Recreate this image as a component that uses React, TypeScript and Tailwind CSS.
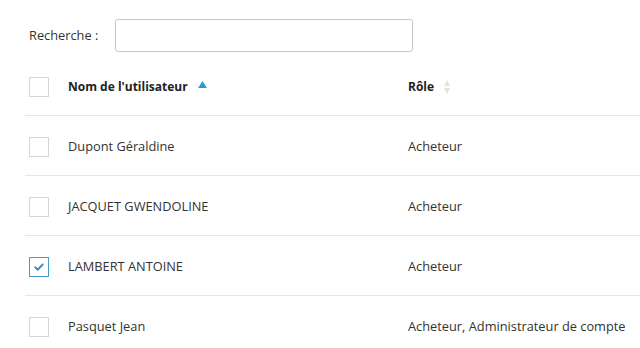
const users = [
  { name: 'Dupont Géraldine', role: 'Acheteur', checked: false },
  { name: 'JACQUET GWENDOLINE', role: 'Acheteur', checked: false },
  { name: 'LAMBERT ANTOINE', role: 'Acheteur', checked: true },
  { name: 'Pasquet Jean', role: 'Acheteur, Administrateur de compte', checked: false },
];

const Checkbox = ({ checked }: { checked: boolean }) => (
  <div
    className={`w-5 h-5 flex items-center justify-center border bg-white ${
      checked ? 'border-[#4a9bcb]' : 'border-[#d6d6d6]'
    }`}
  >
    {checked && (
      <svg viewBox="0 0 12 12" className="w-[12px] h-[12px]">
        <path d="M2.3 6.3l2.4 2.4 4.9-5.2" fill="none" stroke="#3b8fcf" strokeWidth={2} strokeLinecap="round" strokeLinejoin="round" />
      </svg>
    )}
  </div>
);

export default function App() {
  return (
    <div className="w-[640px] h-[348px] bg-white overflow-hidden font-['Open_Sans',sans-serif] text-[12.8px] text-[#333]">
      {/* Search */}
      <div className="flex items-center pt-[19px] pl-[29px]">
        <span className="w-[86px] text-[#333]">Recherche :</span>
        <input className="w-[298px] h-[33px] border border-[#c8c8c8] rounded-[3px] outline-none px-2" />
      </div>

      {/* Table */}
      <div className="mt-[4px] ml-[25px]">
        <div className="flex items-center h-[60px] pt-[2px] border-b border-[#e6e6e6]">
          <div className="pl-[4px] w-[43px]">
            <Checkbox checked={false} />
          </div>
          <div className="w-[340px] flex items-center font-bold text-[12px] text-[#222]">
            Nom de l'utilisateur
            <svg viewBox="0 0 10 8" className="w-[9px] h-[7px] ml-[10px] -mt-[5px]">
              <path d="M5 0L10 8H0z" fill="#1ea0d6" />
            </svg>
          </div>
          <div className="flex items-center font-bold text-[12px] text-[#222]">
            Rôle
            <svg viewBox="0 0 6 14" className="w-[6px] h-[14px] ml-[10px]">
              <path d="M3 0L6 6H0z M3 14L0 8h6z" fill="#e2e2e2" />
            </svg>
          </div>
        </div>
        {users.map((u, i) => (
          <div
            key={u.name}
            className={`flex items-center h-[60px] pt-[2px] ${i < users.length - 1 ? 'border-b border-[#e6e6e6]' : ''}`}
          >
            <div className="pl-[4px] w-[43px]">
              <Checkbox checked={u.checked} />
            </div>
            <div className="w-[340px]">{u.name}</div>
            <div>{u.role}</div>
          </div>
        ))}
      </div>
    </div>
  );
}
